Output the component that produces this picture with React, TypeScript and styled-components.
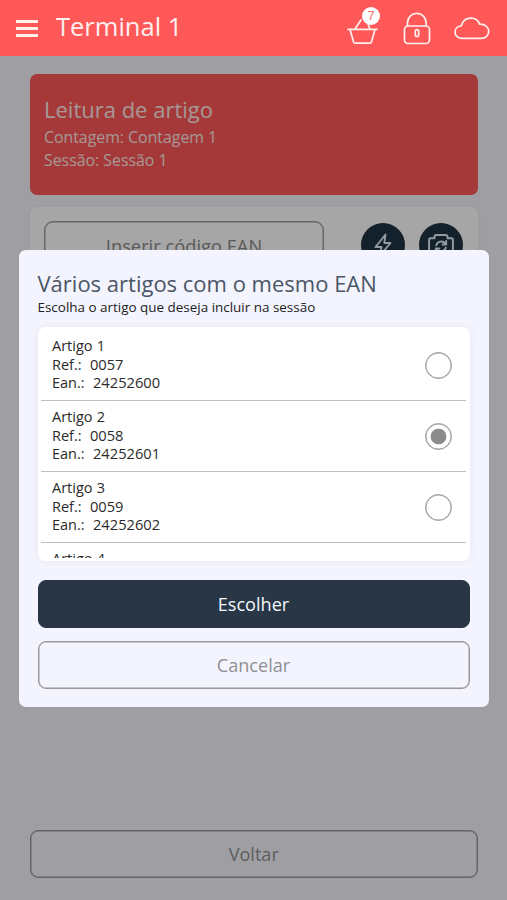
import React, { useState } from "react";
import styled, { createGlobalStyle, css } from "styled-components";

const GlobalStyle = createGlobalStyle`
  * { box-sizing: border-box; }
  body { margin: 0; font-family: "Open Sans", "Noto Sans", sans-serif; overflow: hidden; }
  button, input { font-family: inherit; }
`;

const Page = styled.div`
  display: flex;
  flex-direction: column;
  height: 900px;
  background: #f4f5fb;
`;

const Header = styled.header`
  display: flex;
  align-items: center;
  flex: none;
  height: 56px;
  padding: 0 17px 0 16px;
  background: #fe5859;
  color: #fff0ee;
`;

const MenuButton = styled.button`
  display: flex;
  flex-direction: column;
  gap: 4px;
  width: 22px;
  margin-top: 1px;
  padding: 0;
  border: 0;
  background: none;
`;

const MenuBar = styled.span`
  height: 3px;
  background: #fff0ee;
`;

const HeaderTitle = styled.h1`
  flex: 1;
  margin: -5px 0 0 18px;
  font-size: 25.5px;
  line-height: 36px;
  font-weight: 400;
`;

const HeaderIcons = styled.div`
  display: flex;
  height: 56px;
`;

const HeaderIcon = styled.div<{ $w: number; $gap?: number }>`
  position: relative;
  width: ${(p) => p.$w}px;
  margin-left: ${(p) => p.$gap ?? 0}px;
  svg { display: block; }
`;

const Badge = styled.span`
  position: absolute;
  top: 7px;
  left: 15px;
  width: 18px;
  height: 18px;
  border-radius: 50%;
  background: #fff;
  color: #f0696a;
  font: 12px/18px "Liberation Sans", sans-serif;
  text-align: center;
`;

const Main = styled.main`
  position: relative;
  display: flex;
  flex: 1;
  flex-direction: column;
  padding: 18px 29.5px 22px 30px;
`;

const SessionCard = styled.section`
  height: 121px;
  padding: 19px 14px;
  border-radius: 7px;
  background: #fe5859;
  color: #ffe9e4;
`;

const SessionTitle = styled.h2`
  margin: 0 0 1px;
  font-size: 22px;
  line-height: 32px;
  font-weight: 400;
`;

const SessionLine = styled.p`
  margin: 0;
  font-size: 15.85px;
  line-height: 23px;
`;

const ScanCard = styled.section`
  display: flex;
  align-items: flex-start;
  height: 350px;
  margin-top: 12px;
  padding: 14px 14px;
  border-radius: 7px;
  background: #fff;
  box-shadow: 0 0 8px rgba(0, 0, 0, 0.04);
`;

const EanField = styled.input`
  flex: none;
  width: 280px;
  height: 48px;
  margin-right: 37px;
  padding: 0;
  border: 1px solid #9b9b9b;
  border-radius: 9px;
  background: none;
  box-shadow: inset 0 0 0 0.5px #9b9b9b;
  text-align: center;
  font-size: 18.3px;
  &::placeholder { color: #8a8a8a; opacity: 1; }
`;

const RoundButton = styled.button`
  display: flex;
  flex: none;
  align-items: center;
  justify-content: center;
  width: 44px;
  height: 44px;
  margin: 2px 14px 0 0;
  padding: 0;
  border: 0;
  border-radius: 50%;
  background: #1c3342;
  color: #e2ecf4;
  &:last-child { margin-right: 0; }
`;

const Button = styled.button<{ $filled?: boolean }>`
  display: block;
  flex: none;
  width: 100%;
  height: 48px;
  padding: 0;
  border: 1px solid #98989a;
  border-radius: 8px;
  background: none;
  box-shadow: inset 0 0 0 0.5px #98989a;
  color: #8f9092;
  font-size: 18.1px;
  ${(p) =>
    p.$filled &&
    css`
      border-color: #293646;
      background: #293646;
      box-shadow: none;
      color: #f3f7fc;
    `}
`;

const Footer = styled.div`
  margin-top: auto;
`;

const Overlay = styled.div`
  position: absolute;
  inset: 0;
  display: flex;
  align-items: flex-start;
  justify-content: center;
  padding-top: 194px;
  background: rgba(0, 0, 0, 0.35);
`;

const Dialog = styled.div`
  width: 470px;
  height: 457px;
  padding: 17px 19px;
  border-radius: 7px;
  background: #f3f4fd;
`;

const DialogTitle = styled.h2`
  margin: 0;
  color: #4b5667;
  font-size: 22px;
  line-height: 32px;
  font-weight: 400;
  white-space: nowrap;
`;

const DialogText = styled.p`
  margin: -1px 0 10px;
  color: #222;
  font-size: 13.45px;
  line-height: 19px;
`;

const List = styled.div`
  height: 234px;
  margin-bottom: 19px;
  padding: 3px 3.5px;
  border-radius: 8px;
  background: #fff;
  box-shadow: 0 0 8px rgba(0, 0, 0, 0.06);
`;

const Scroller = styled.div`
  height: 228px;
  overflow: hidden;
`;

const Row = styled.label`
  display: flex;
  align-items: center;
  justify-content: space-between;
  height: 71px;
  padding: 0 14px 0 11px;
  border-bottom: 1px solid #bfbfbf;
  color: #2b2b2b;
  font-size: 14.5px;
  line-height: 18.5px;
  white-space: pre;
`;

const RowText = styled.span`
  word-spacing: 0.4px;
`;

const Code = styled.span`
  font-size: 14.7px;
  line-height: 1;
`;

const Radio = styled.input`
  appearance: none;
  width: 27px;
  height: 27px;
  margin: 0;
  border: 1px solid #999;
  border-radius: 50%;
  box-shadow: inset 0 0 0 0.5px #999;
  &:checked { background: radial-gradient(circle, #8b8b8b 7.5px, transparent 8.2px); }
`;

const Actions = styled.div`
  display: flex;
  flex-direction: column;
  gap: 13px;
`;

const articles = [
  { name: "Artigo 1", ref: "0057", ean: "24252600" },
  { name: "Artigo 2", ref: "0058", ean: "24252601" },
  { name: "Artigo 3", ref: "0059", ean: "24252602" },
  { name: "Artigo 4", ref: "0060", ean: "24252603" },
];

const stroke = {
  fill: "none",
  stroke: "currentColor",
  strokeLinecap: "round" as const,
  strokeLinejoin: "round" as const,
};

const BasketIcon = () => (
  <svg width="32" height="56" {...stroke} strokeWidth="1.7">
    <path d="M1 29.3h29M3 29.5l3.6 12.6q.3 1.1 1.4 1.1h15q1.1 0 1.4-1.1l3.6-12.6M8 29l6-9M23 29l-2-5" />
  </svg>
);

const LockIcon = () => (
  <svg width="28" height="56" {...stroke} strokeWidth="1.7">
    <rect x="1.5" y="26" width="25" height="17.5" rx="3.5" />
    <path d="M4.5 26v-3.3a9.3 9.3 0 0 1 18.6 0V26" />
    <rect x="12.3" y="29.7" width="3.4" height="6.8" rx="1.7" />
  </svg>
);

const CloudIcon = () => (
  <svg width="36" height="56" {...stroke} strokeWidth="1.7">
    <path d="M7.5 38.3C3.8 38.3 1 35.5 1 32c0-3.4 2.6-5.8 6.3-6 1.2-4.6 4.7-7.8 9.5-7.8 4.3 0 7.6 2.3 8.8 6 5.4-.2 9.1 2.8 9.1 7.1 0 4.1-3.1 7-7.2 7Z" />
  </svg>
);

const BoltIcon = () => (
  <svg width="24" height="24" viewBox="0 0 24 24" {...stroke} strokeWidth="1.9">
    <path d="M14.5 1.5 4.5 14h6L8.8 22.5 19.5 10h-6.2Z" />
  </svg>
);

const CameraSwitchIcon = () => (
  <svg width="26" height="26" viewBox="0 0 24 24" {...stroke} strokeWidth="1.8">
    <path d="M2.5 5.8H6V4.5q0-1.7 1.7-1.7h8.6Q18 2.8 18 4.500v1.300h3.500q1.500 0 1.500 1.500V20q0 1.500-1.500 1.500h-19Q1 21.500 1 20V7.300Q1 5.800 2.500 5.800Z" />
    <path d="M7.600 12.200a4.800 4.800 0 0 1 8.300-1.700l.7.8M16.800 8.200v3.300h-3.300M16.400 14.500a4.800 4.800 0 0 1-8.300 1.700l-.7-.8M7.200 18.500v-3.300h3.300" />
  </svg>
);

export default function App() {
  const [selected, setSelected] = useState(1);
  return (
    <Page>
      <GlobalStyle />
      <Header>
        <MenuButton aria-label="Menu">
          <MenuBar />
          <MenuBar />
          <MenuBar />
        </MenuButton>
        <HeaderTitle>Terminal 1</HeaderTitle>
        <HeaderIcons>
          <HeaderIcon $w={32}>
            <BasketIcon />
            <Badge>7</Badge>
          </HeaderIcon>
          <HeaderIcon $w={28} $gap={24}>
            <LockIcon />
          </HeaderIcon>
          <HeaderIcon $w={36} $gap={23}>
            <CloudIcon />
          </HeaderIcon>
        </HeaderIcons>
      </Header>
      <Main>
        <SessionCard>
          <SessionTitle>Leitura de artigo</SessionTitle>
          <SessionLine>Contagem: Contagem 1</SessionLine>
          <SessionLine>Sessão: Sessão 1</SessionLine>
        </SessionCard>
        <ScanCard>
          <EanField placeholder="Inserir código EAN" />
          <RoundButton aria-label="Flash">
            <BoltIcon />
          </RoundButton>
          <RoundButton aria-label="Trocar câmara">
            <CameraSwitchIcon />
          </RoundButton>
        </ScanCard>
        <Footer>
          <Button>Voltar</Button>
        </Footer>
        <Overlay>
          <Dialog role="dialog">
            <DialogTitle>Vários artigos com o mesmo EAN</DialogTitle>
            <DialogText>Escolha o artigo que deseja incluir na sessão</DialogText>
            <List>
              <Scroller>
                {articles.map((a, i) => (
                  <Row key={a.ref}>
                    <RowText>
                      {`${a.name}\nRef.:  `}
                      <Code>{a.ref}</Code>
                      {"\nEan.:  "}
                      <Code>{a.ean}</Code>
                    </RowText>
                    <Radio
                      type="radio"
                      name="article"
                      checked={selected === i}
                      onChange={() => setSelected(i)}
                    />
                  </Row>
                ))}
              </Scroller>
            </List>
            <Actions>
              <Button $filled>Escolher</Button>
              <Button>Cancelar</Button>
            </Actions>
          </Dialog>
        </Overlay>
      </Main>
    </Page>
  );
}
